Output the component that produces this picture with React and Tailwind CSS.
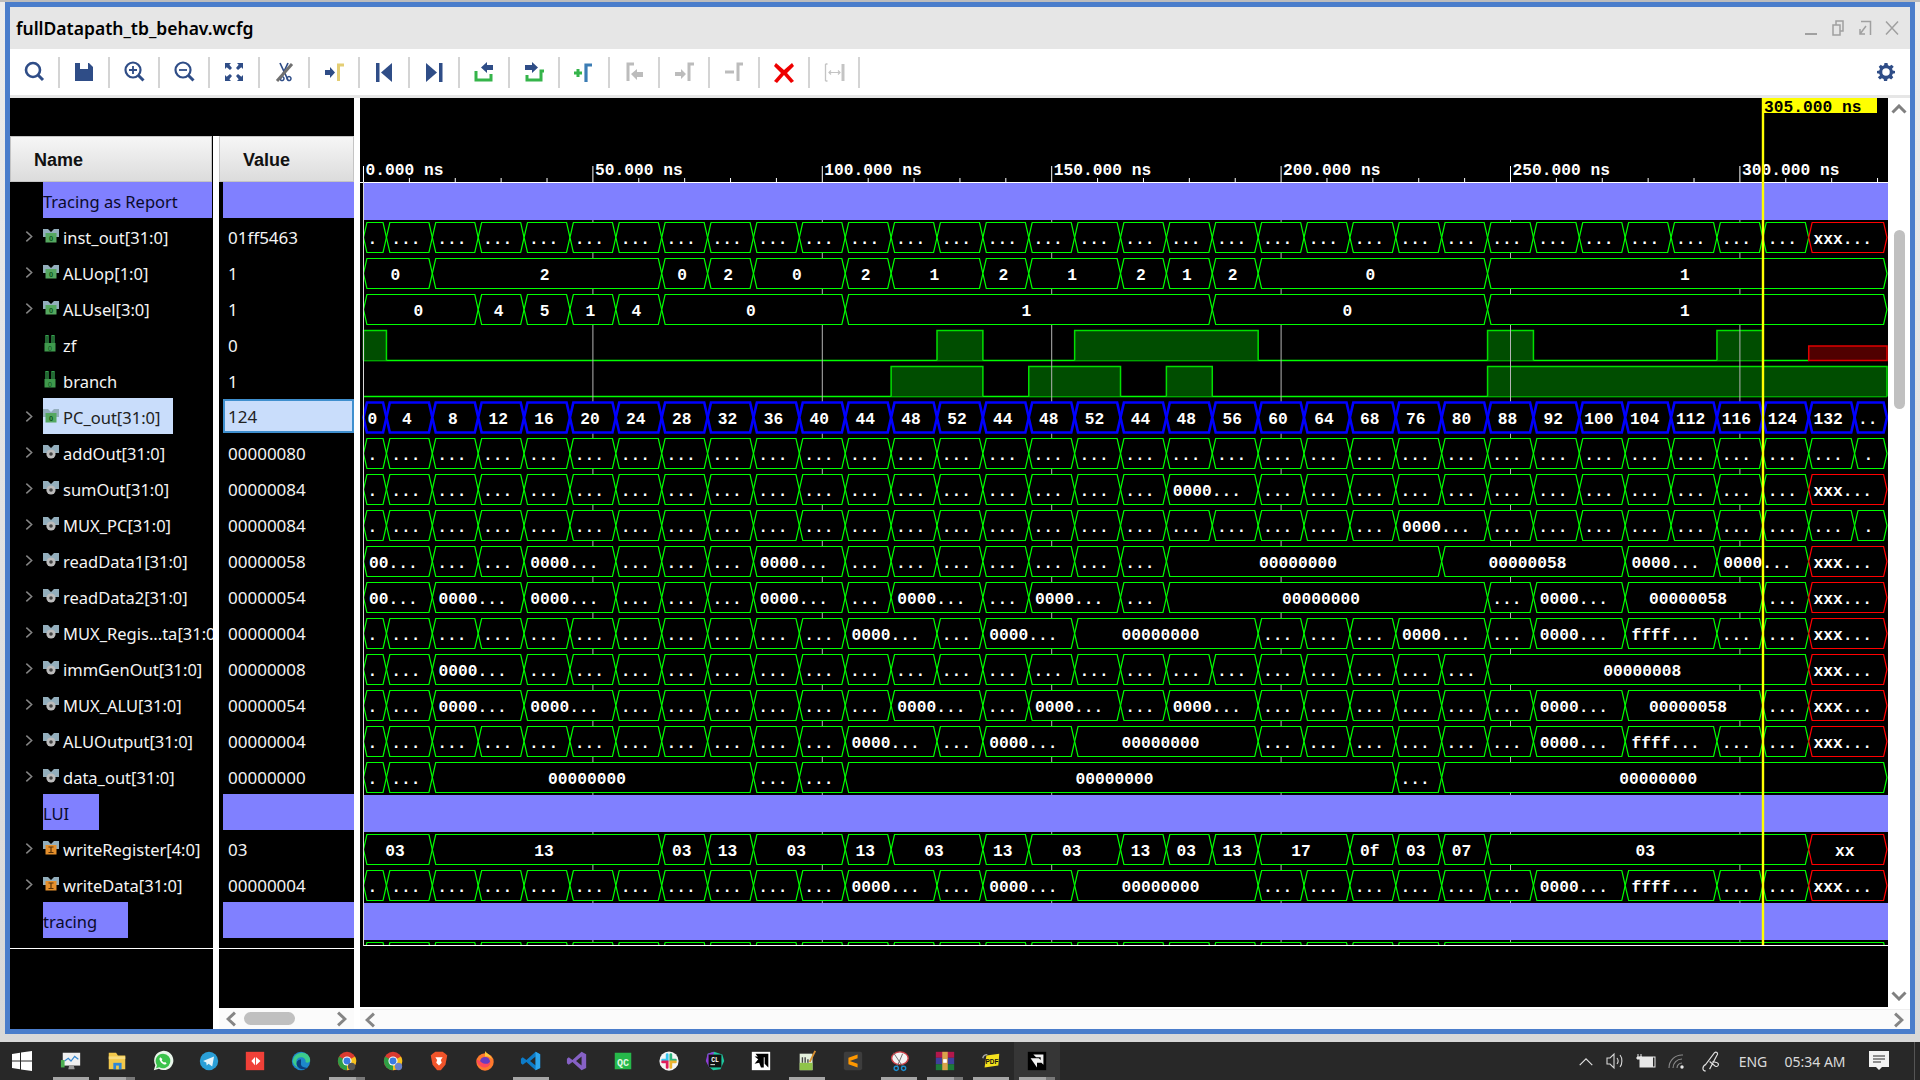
import { Fragment } from 'react';

const dots = (n) => Array(n).fill([1, '...']);
const XX = [2, 'xxx...'];
const OH = [2, '0000...'];

const aluOutput = [[1, '.'], ...dots(10), OH, ...dots(1), OH, [4, '00000000'], ...dots(6), OH, [2, 'ffff...'], ...dots(2), XX];

// each entry: [slots, label]; a slot is one 10 ns clock period
const SIGNALS = [
  { name: 'inst_out[31:0]', value: '01ff5463', icon: 'bus', wave: [[1, '.'], ...dots(31), XX] },
  { name: 'ALUop[1:0]', value: '1', icon: 'bus', wave: [[2, '0'], [5, '2'], [1, '0'], [1, '2'], [2, '0'], [1, '2'], [2, '1'], [1, '2'], [2, '1'], [1, '2'], [1, '1'], [1, '2'], [5, '0'], [9, '1']] },
  { name: 'ALUsel[3:0]', value: '1', icon: 'bus', wave: [[3, '0'], [1, '4'], [1, '5'], [1, '1'], [1, '4'], [4, '0'], [8, '1'], [6, '0'], [9, '1']] },
  { name: 'zf', value: '0', icon: 'bit', bits: [[0, 0], [13, 13], [16, 19], [25, 25], [30, 30]], unknownFrom: 32 },
  { name: 'branch', value: '1', icon: 'bit', bits: [[12, 13], [15, 16], [18, 18], [25, 33]] },
  { name: 'PC_out[31:0]', value: '124', icon: 'bus', selected: true, wave: ['0', '4', '8', '12', '16', '20', '24', '28', '32', '36', '40', '44', '48', '52', '44', '48', '52', '44', '48', '56', '60', '64', '68', '76', '80', '88', '92', '100', '104', '112', '116', '124', '132', '..'].map((l) => [1, l]) },
  { name: 'addOut[31:0]', value: '00000080', icon: 'gear', wave: [[1, '.'], ...dots(32), [1, '.']] },
  { name: 'sumOut[31:0]', value: '00000084', icon: 'gear', wave: [[1, '.'], ...dots(17), OH, ...dots(12), XX] },
  { name: 'MUX_PC[31:0]', value: '00000084', icon: 'gear', wave: [[1, '.'], ...dots(22), OH, ...dots(8), [1, '.']] },
  { name: 'readData1[31:0]', value: '00000058', icon: 'gear', wave: [[2, '00...'], ...dots(2), OH, ...dots(3), OH, ...dots(7), [6, '00000000'], [4, '00000058'], OH, OH, XX] },
  { name: 'readData2[31:0]', value: '00000054', icon: 'gear', wave: [[2, '00...'], OH, OH, ...dots(3), OH, ...dots(1), OH, ...dots(1), OH, ...dots(1), [7, '00000000'], ...dots(1), OH, [3, '00000058'], ...dots(1), XX] },
  { name: 'MUX_Regis...ta[31:0]', value: '00000004', icon: 'gear', wave: [[1, '.'], ...dots(10), OH, ...dots(1), OH, [4, '00000000'], ...dots(3), OH, ...dots(1), OH, [2, 'ffff...'], ...dots(2), XX] },
  { name: 'immGenOut[31:0]', value: '00000008', icon: 'gear', wave: [[1, '.'], ...dots(1), OH, ...dots(21), [7, '00000008'], XX] },
  { name: 'MUX_ALU[31:0]', value: '00000054', icon: 'gear', wave: [[1, '.'], ...dots(1), OH, OH, ...dots(6), OH, ...dots(1), OH, ...dots(1), OH, ...dots(6), OH, [3, '00000058'], ...dots(1), XX] },
  { name: 'ALUOutput[31:0]', value: '00000004', icon: 'gear', wave: aluOutput },
  { name: 'data_out[31:0]', value: '00000000', icon: 'gear', wave: [[1, '.'], ...dots(1), [7, '00000000'], ...dots(2), [12, '00000000'], ...dots(1), [10, '00000000']] },
];

const WRITES = [
  { name: 'writeRegister[4:0]', value: '03', icon: 'out', wave: [[2, '03'], [5, '13'], [1, '03'], [1, '13'], [2, '03'], [1, '13'], [2, '03'], [1, '13'], [2, '03'], [1, '13'], [1, '03'], [1, '13'], [2, '17'], [1, '0f'], [1, '03'], [1, '07'], [7, '03'], [2, 'xx']] },
  { name: 'writeData[31:0]', value: '00000004', icon: 'out', wave: aluOutput },
];

const X = (t) => 363.5 + t * 4.588;
const slotStart = (i) => (i === 0 ? X(0) : X(5 + 10 * (i - 1)));
const slotEnd = (i) => (i >= 33 ? 1887 : X(5 + 10 * i));

function BusRow({ top, wave, color = '#00ff00', width = 1.2, showLabels = true }) {
  const y0 = top + 0.5;
  const y1 = top + 30.5;
  const mid = top + 15.5;
  let slot = 0;
  return (
    <g>
      {wave.map(([n, label], idx) => {
        const s = slotStart(slot);
        const e = slotEnd(slot + n - 1);
        slot += n;
        const stroke = label.startsWith('x') ? '#ff0000' : color;
        return (
          <Fragment key={idx}>
            <polygon
              points={`${s},${mid} ${s + 3.4},${y0} ${e - 3.4},${y0} ${e},${mid} ${e - 3.4},${y1} ${s + 3.4},${y1}`}
              fill="#000"
              stroke={stroke}
              strokeWidth={width}
            />
            {showLabels && (
              <text x={(s + e) / 2 - (2 + 0.5 * label.length)} y={top + 22} textAnchor="middle" fill="#fff">
                {label}
              </text>
            )}
          </Fragment>
        );
      })}
    </g>
  );
}

function BitRow({ top, bits, unknownFrom }) {
  const y0 = top + 0.5;
  const y1 = top + 30.5;
  const end = unknownFrom ? slotEnd(unknownFrom - 1) : 1887;
  return (
    <g>
      <line x1={X(0)} x2={end} y1={y1} y2={y1} stroke="#00ff00" strokeWidth="1.5" />
      {bits.map(([a, b]) => {
        const s = slotStart(a);
        const e = slotEnd(b);
        return (
          <g key={a}>
            <rect x={s} y={y0} width={e - s} height={y1 - y0} fill="#004d00" />
            <path d={`M${s} ${y1}V${y0}H${e}V${y1}`} fill="none" stroke="#00e000" strokeWidth="1.5" />
          </g>
        );
      })}
      {unknownFrom && (
        <rect x={slotStart(unknownFrom)} y={top + 16} width={1887 - slotStart(unknownFrom)} height="14.5" fill="#500000" stroke="#e00000" strokeWidth="1.5" />
      )}
    </g>
  );
}

function WaveCanvas() {
  const majors = [0, 50, 100, 150, 200, 250, 300];
  const minors = [];
  for (let t = 10; t <= 330; t += 10) if (t % 50 !== 0) minors.push(t);
  return (
    <svg viewBox="360 98 1528 909" className="block w-[1528px] h-[909px] bg-black font-['Liberation_Mono',monospace] font-bold text-[16.25px]">
      {SIGNALS.filter((s) => s.bits).map((s) => (
        <BitRow key={s.name} top={222 + 36 * SIGNALS.indexOf(s)} bits={s.bits} unknownFrom={s.unknownFrom} />
      ))}
      {majors.map((t) => (
        <line key={t} x1={X(t)} x2={X(t)} y1="183" y2="945" stroke="#b4b4b4" />
      ))}
      <rect x="363" y="183" width="1525" height="37" fill="#8080ff" />
      <rect x="363" y="795" width="1525" height="37" fill="#8080ff" />
      <rect x="363" y="903" width="1525" height="37" fill="#8080ff" />

      {SIGNALS.map((s, i) =>
        s.wave ? (
          <BusRow key={s.name} top={222 + 36 * i} wave={s.wave} color={s.selected ? '#0000ff' : '#00ff00'} width={s.selected ? 2.6 : 1.2} />
        ) : null,
      )}
      {WRITES.map((s, i) => (
        <BusRow key={s.name} top={834 + 36 * i} wave={s.wave} />
      ))}
      <BusRow top={942} wave={[[1, '.'], ...dots(23), [10, '']]} showLabels={false} />
      <rect x="360" y="945" width="1528" height="62" fill="#000" />

      <line x1="360" x2="1888" y1="182.5" y2="182.5" stroke="#fff" />
      <line x1="363" x2="1888" y1="945.5" y2="945.5" stroke="#fff" />
      <line x1="363.5" x2="363.5" y1="166" y2="946" stroke="#d8d8d8" />
      {minors.map((t) => (
        <line key={t} x1={X(t)} x2={X(t)} y1="178" y2="182" stroke="#fff" />
      ))}
      {majors.map((t) => (
        <Fragment key={t}>
          <line x1={X(t)} x2={X(t)} y1="166" y2="182" stroke="#fff" />
          <text x={X(t) + 2} y="175" fill="#fff">{`${t}.000 ns`}</text>
        </Fragment>
      ))}

      <rect x="1763" y="98" width="114" height="15" fill="#ffff00" />
      <text x="1764" y="112" fill="#000">305.000 ns</text>
      <line x1="1763" x2="1763" y1="98" y2="945" stroke="#ffff00" strokeWidth="2.4" />
    </svg>
  );
}

function Chevron({ dir = 'right', size = 'h-[13px] w-[8px]', color = '#858585', sw = 1.7 }) {
  const d = { right: 'M1.5 1.5 7.5 7l-6 5.5', left: 'M7.5 1.5 1.5 7l6 5.5' }[dir];
  return (
    <svg viewBox="0 0 9 14" className={size}>
      <path d={d} fill="none" stroke={color} strokeWidth={sw} />
    </svg>
  );
}

function VArrow({ up }) {
  return (
    <svg viewBox="0 0 16 10" className="w-[16px] h-[10px]">
      <path d={up ? 'M1.5 8.5 8 2l6.5 6.5' : 'M1.5 1.5 8 8l6.5-6.5'} fill="none" stroke="#808080" strokeWidth="3" />
    </svg>
  );
}

function SignalIcon({ type }) {
  if (type === 'bit') {
    return (
      <svg viewBox="0 0 16 17" className="w-[16px] h-[17px] shrink-0 -mt-[5px]">
        <path d="M3 0v8M5 0v8M9 0v8M11 0v8" stroke="#35a04e" strokeWidth="1.300" />
        <path d="M3 .5h2M9 .5h2" stroke="#35a04e" />
        <rect x="1.500" y="8" width="11" height="8.500" fill="#3f9a4d" />
        <text x="7" y="15.500" fontSize="7" textAnchor="middle" fill="#0b4f1c" fontFamily="Liberation Sans">0</text>
      </svg>
    );
  }
  const box = type === 'out' ? '#e48f2c' : '#55a860';
  return (
    <svg viewBox="0 0 16 15" className="w-[16px] h-[15px] shrink-0 -mt-[5px]">
      <path d="M0 1h5l3 3 3-3h5v8H0z" fill="#93aebc" />
      {type === 'gear' ? (
        <>
          <circle cx="8" cy="10" r="4.600" fill="#bcbcbc" />
          <circle cx="8" cy="10" r="1.800" fill="#444" />
        </>
      ) : (
        <>
          <rect x="2.500" y="5" width="11" height="9.500" fill={box} />
          {type === 'out' ? (
            <path d="M5.500 7h5M5.500 12.500h5M8 7v5.500" stroke="#5a3205" strokeWidth="1.200" />
          ) : (
            <text x="8" y="13" fontSize="7.500" textAnchor="middle" fill="#0c5a1d" fontFamily="Liberation Sans" fontWeight="700">0</text>
          )}
        </>
      )}
    </svg>
  );
}

function GroupName({ label, w }) {
  return (
    <div className="h-[36px] pl-[33px]">
      <div className={`h-full ${w} bg-[#8080ff] text-[#0a0a2a] flex items-center overflow-hidden whitespace-nowrap pt-[4px]`}>{label}</div>
    </div>
  );
}

function NameRow({ s }) {
  return (
    <div className="h-[36px] flex items-center whitespace-nowrap overflow-hidden">
      <div className="w-[33px] pl-[15px] shrink-0 flex">{s.icon !== 'bit' && <Chevron />}</div>
      <div className={`h-full flex items-center gap-[4px] pt-[4px] ${s.selected ? 'w-[130px] bg-[#c9ddfb] text-[#222]' : 'text-[#f4f4f4]'}`}>
        <SignalIcon type={s.icon} />
        <span>{s.name}</span>
      </div>
    </div>
  );
}

function ValueRow({ s }) {
  if (s.selected) {
    return (
      <div className="h-[36px] pl-[4px] py-[1px]">
        <div className="h-full border-2 border-[#3f8fce] bg-[#c9ddfb] text-[#222] text-[17px] flex items-center pl-[3px] pt-[2px]">{s.value}</div>
      </div>
    );
  }
  return <div className="h-[36px] pl-[9px] pt-[4px] flex items-center text-[17px] text-[#f4f4f4]">{s.value}</div>;
}

function GroupValue() {
  return (
    <div className="h-[36px] pl-[4px]">
      <div className="h-full bg-[#8080ff]" />
    </div>
  );
}

const N = '#2f4d87';

const TOOLS = [
  <g key="a" fill="none" stroke={N} strokeWidth="2.600"><circle cx="11" cy="10" r="7" /><path d="M16 15l5 5" strokeWidth="3" /></g>,
  <path key="b" d="M3 3h14l4 4v14H3z M8 3v6h8V3z" fill={N} fillRule="evenodd" />,
  <g key="c" fill="none" stroke={N} strokeWidth="2.200"><circle cx="11" cy="10" r="7.500" /><path d="M16.500 15.500l5 5" strokeWidth="3" /><path d="M7 10h8M11 6v8" strokeWidth="1.800" /></g>,
  <g key="d" fill="none" stroke={N} strokeWidth="2.200"><circle cx="11" cy="10" r="7.500" /><path d="M16.500 15.500l5 5" strokeWidth="3" /><path d="M7 10h8" strokeWidth="1.800" /></g>,
  <g key="e"><path d="M3 3h6L7.300 4.700 10 8 8 10 4.700 7.300 3 9zM21 3v6l-1.700-1.700L16 10l-2-2 2.700-3.300L15 3zM3 21v-6l1.700 1.700L8 14l2 2-2.700 3.300L9 21zM21 21h-6l1.700-1.700L14 16l2-2 3.300 2.700L21 15z" fill={N} /></g>,
  <g key="f" fill="none"><path d="M8 3l8 17M16 3 8 20" stroke={N} strokeWidth="1.700" /><path d="M8 18.500a2 2 0 110 .1M15 18.500a2 2 0 110 .1" stroke={N} strokeWidth="1.500" /><path d="M20 4 5 21" stroke="#707070" strokeWidth="3" /></g>,
  <g key="g"><path d="M3 10h5V7l5 5.500L8 18v-3H3z" fill={N} /><path d="M16.500 21V5h5.500" fill="none" stroke="#e4ce74" strokeWidth="3" /></g>,
  <g key="h" fill={N}><rect x="4" y="3" width="3.500" height="19" /><path d="M20 3v19L9 12.500z" /></g>,
  <g key="i" fill={N}><rect x="17" y="3" width="3.500" height="19" /><path d="M4 3v19l11-9.500z" /></g>,
  <g key="j"><path d="M4 11v9h15v-6" fill="none" stroke="#35b44a" strokeWidth="3" /><path d="M9 7.500l6-5.500v3h6v5h-6v3z" fill={N} /></g>,
  <g key="k"><path d="M5 15v5h14v-9h3" fill="none" stroke="#35b44a" strokeWidth="3" /><path d="M3 5h7V2l6 5.500L10 13v-3H3z" fill={N} /></g>,
  <g key="l"><path d="M2 13h8M6 9v8" stroke="#35b44a" strokeWidth="3" /><path d="M14 22V5h6" fill="none" stroke="#3b7cb4" strokeWidth="3.200" /></g>,
  <g key="m" fill="#bcbcbc"><path d="M6 21V4h6" fill="none" stroke="#bcbcbc" strokeWidth="3" /><path d="M9 14l6-5v3h6v5h-6v3z" /></g>,
  <g key="n" fill="#bcbcbc"><path d="M3 12h6V9l5 5-5 5v-3H3z" /><path d="M17 21V4h5" fill="none" stroke="#bcbcbc" strokeWidth="3" /></g>,
  <g key="o"><path d="M3 12h9" stroke="#bcbcbc" strokeWidth="3" /><path d="M16 21V4h5" fill="none" stroke="#bcbcbc" strokeWidth="3" /></g>,
  <path key="p" d="M4 3l8 7 8-7 2 3-7 7 7 8-3 2-7-8-7 8-3-2 7-8-7-7z" fill="#ee0000" />,
  <g key="q" fill="none" stroke="#c4c4c4"><path d="M3.500 4v17M5.500 4H3.500M5.500 21H3.500" strokeWidth="1.300" /><path d="M21 4v17" strokeWidth="3" /><path d="M7 12.500h11M9 10.500l-2 2 2 2M16 10.500l2 2-2 2" strokeWidth="1.200" /></g>,
];

function Toolbar() {
  return (
    <div className="h-[46px] bg-white flex items-center">
      {TOOLS.map((icon, i) => (
        <div key={i} className="w-[50px] h-[31px] border-r-2 border-[#d4d4d4] flex items-center justify-center">
          <svg viewBox="0 0 24 24" className="w-[24px] h-[24px]">{icon}</svg>
        </div>
      ))}
      <svg viewBox="0 0 24 24" className="w-[18px] h-[18px] ml-auto mr-[15px]">
        <path d="M10 1h4l.6 3 2.300 1 2.600-1.700 2.800 2.800L20 8.700l1 2.300 3 .6v3l-3 .6-1 2.300 1.700 2.600-2.800 2.800-2.600-1.700-2.300 1-.6 3h-4l-.6-3-2.300-1-2.600 1.700-2.800-2.800L4 17.500l-1-2.300-3-.6v-3l3-.6 1-2.300-1.700-2.600 2.800-2.800L7.100 5l2.300-1zM12 8a5 5 0 100 10 5 5 0 000-10z" fill={N} fillRule="evenodd" transform="translate(0 -1)" />
      </svg>
    </div>
  );
}

function WindowButtons() {
  return (
    <div className="flex items-center gap-[11px] mr-[10px]">
      <svg viewBox="0 0 16 16" className="w-[16px] h-[16px]"><path d="M2 14h12" stroke="#a0a0a0" strokeWidth="2" /></svg>
      <svg viewBox="0 0 16 16" className="w-[16px] h-[16px]"><path d="M6 5V1h7v10h-3M3 5h7v10H3z" fill="none" stroke="#a0a0a0" strokeWidth="1.500" /></svg>
      <svg viewBox="0 0 16 16" className="w-[16px] h-[16px]"><path d="M4 1.500h9.500V15M9 6 3 14M3 9v5h5" fill="none" stroke="#a0a0a0" strokeWidth="1.500" /></svg>
      <svg viewBox="0 0 16 16" className="w-[16px] h-[16px]"><path d="M2 1.500l12 13M14 1.500l-12 13" fill="none" stroke="#a0a0a0" strokeWidth="1.500" /></svg>
    </div>
  );
}

const APPS = [
  { on: 1, g: <g><rect x="3" y="3" width="19" height="14" fill="#f0f0f0" /><path d="M5 12l4-3 3 3 4-5 4 3" fill="none" stroke="#3a8ad0" strokeWidth="1.300" /><path d="M10 17h5l1 4H9z" fill="#9a9a9a" /><rect x="1" y="11" width="4" height="8" fill="#4caf50" /></g> },
  { on: 2, g: <g><path d="M3 3h8l2 3h8v15H3z" fill="#f2c84b" /><path d="M3 7h18v3H3z" fill="#f8dc80" /><rect x="8" y="14" width="9" height="7" fill="#2f86d8" /><rect x="11" y="17" width="3" height="4" fill="#f2c84b" /></g> },
  { g: <g><path d="M2 22l1.600-5.500A10.500 10.500 0 1 1 7.500 20.500z" fill="#e8f5ea" /><path d="M12 4a8 8 0 0 0-6.600 12.500l-.9 3.300 3.400-.9A8 8 0 1 0 12 4z" fill="#3ac34c" /><path d="M9 8c-1.500 1-1 3.500 1 5.500s4.500 3 6 1.500l-1.500-2-1.500.7c-1-.5-2-1.600-2.400-2.500l.8-1.300z" fill="#fff" /></g> },
  { g: <g><circle cx="12" cy="12" r="10" fill="#2a9fd8" /><path d="M5.500 12 17.500 7l-2 11-4-3-2 2-.5-3.500z" fill="#e6f4fb" /></g> },
  { g: <g><rect x="2" y="2" width="20" height="20" fill="#f04038" /><path d="M8 12l4-4.500v9zM13 7.500l5 4.500-5 4.500z" fill="#fff" /></g> },
  { g: <g><circle cx="12" cy="12" r="10" fill="#1d87cc" /><path d="M3 13c0-6 5-10 10-10 5 0 9 3.500 9 8 0 3-4 3.500-5 2 .5-3-2-5-5-5-4 0-6 3.500-4.500 7 1.500 3.500 5 5 8 4.500A10 10 0 0 1 3 13z" fill="#3ccb8c" /><path d="M12 10a5 5 0 0 0-4 8c2 3 7 4 11 1.500-3 0-8-1-7-5.500z" fill="#0a3f80" /></g> },
  { on: 2, g: <g><circle cx="12" cy="12" r="10" fill="#d93a30" /><path d="M12 12 3.400 7A10 10 0 0 0 12 22z" fill="#2f9e44" /><path d="M12 12v10a10 10 0 0 0 8.700-15z" fill="#f6c21c" /><circle cx="12" cy="12" r="5" fill="#fff" /><circle cx="12" cy="12" r="3.800" fill="#3b7be0" /><circle cx="17" cy="18" r="4" fill="#555" /></g> },
  { g: <g><circle cx="12" cy="12" r="10" fill="#d93a30" /><path d="M12 12 3.400 7A10 10 0 0 0 12 22z" fill="#2f9e44" /><path d="M12 12v10a10 10 0 0 0 8.700-15z" fill="#f6c21c" /><circle cx="12" cy="12" r="5" fill="#fff" /><circle cx="12" cy="12" r="3.800" fill="#3b7be0" /><circle cx="18" cy="18" r="4" fill="#6a82c8" /></g> },
  { g: <g><path d="M5 4l3-2h8l3 2 2 2-2 10-5 6h-4l-5-6L3 6z" fill="#f0542a" /><path d="M8 8h8l-2 3 1 3-3 3-3-3 1-3z" fill="#fff" /></g> },
  { g: <g><circle cx="12" cy="13" r="9.500" fill="#ff7a2d" /><path d="M12 1c2 3 6 4 8 9-3-3-5-3-8-3z" fill="#ffc83a" /><circle cx="12" cy="13" r="5.500" fill="#6a3bc0" /><path d="M3 11c3-1 4 3 9 4 3 .6 5-1 6-3 0 5-4 8-8 7S3 15 3 11z" fill="#ff4a5a" /></g> },
  { on: 1, g: <g><path d="M17 2l5 2.500v15L17 22 7 13l-4 3-2-1.500v-5L3 8l4 3z" fill="#0d7cc9" /><path d="M17 7l-6 5 6 5z" fill="#282828" /><path d="M17 2l5 2.500v15L17 22v-5l0-10z" fill="#2ea6ec" /></g> },
  { g: <g><path d="M17 2l5 2.500v15L17 22 7 13l-4 3-2-1.500v-5L3 8l4 3z" fill="#8661c5" /><path d="M17 7l-6 5 6 5z" fill="#282828" /></g> },
  { g: <g><rect x="3" y="3" width="18" height="18" fill="#26b84a" /><text x="12" y="17" fontSize="11" textAnchor="middle" fill="#dff7e4" fontFamily="Liberation Mono" fontWeight="700">QC</text></g> },
  { g: <g><circle cx="12" cy="12" r="10.500" fill="#f4f4f4" /><path d="M10 5v6H5" fill="none" stroke="#36c5f0" strokeWidth="3" strokeLinecap="round" /><path d="M14 5v6h5" fill="none" stroke="#2eb67d" strokeWidth="3" strokeLinecap="round" /><path d="M10 19v-6H5" fill="none" stroke="#e01e5a" strokeWidth="3" strokeLinecap="round" /><path d="M14 19v-6h5" fill="none" stroke="#ecb22e" strokeWidth="3" strokeLinecap="round" /></g> },
  { g: <g><path d="M4 4l7-2 9 3 2 7-4 9-8 1-5-4-2-7z" fill="#1ec8a0" /><path d="M4 4l7-2-5 18-4-8z" fill="#8f3fd8" /><rect x="5" y="5" width="14" height="14" fill="#111" /><text x="12" y="13" fontSize="7" textAnchor="middle" fill="#fff" fontFamily="Liberation Mono" fontWeight="700">CL</text><path d="M7 16h5" stroke="#fff" /></g> },
  { g: <g><rect x="2" y="2" width="20" height="20" fill="#fff" /><path d="M5 7h10v12h-3l-2-5-5 1 4-5z" fill="#000" /><path d="M6 4h14v15l-4-4V8H9z" fill="#000" /></g> },
  { on: 1, g: <g><path d="M4 4h14v18H4z" fill="#e4f0dc" /><rect x="4" y="14" width="14" height="8" fill="#8fc44a" /><path d="M7 8v6M10 8v6M13 10v4" stroke="#444" strokeWidth="1.500" /><path d="M21 1l-6 12" stroke="#d89030" strokeWidth="2" /></g> },
  { g: <g><rect x="2" y="2" width="20" height="20" rx="2" fill="#3d3d3d" /><path d="M7 8.500l10-3.500v4L7 12.500zM7 11.500l10 3.500v4L7 15.500z" fill="#ff9800" /></g> },
  { on: 1, g: <g><ellipse cx="13" cy="9" rx="9" ry="7" fill="#f4f4f4" stroke="#d04048" strokeWidth="1.500" /><path d="M6 3l10 15M16 4 10 18" stroke="#666" strokeWidth="1" /><circle cx="9" cy="20" r="2.300" fill="none" stroke="#1d8ed0" strokeWidth="1.500" /><circle cx="17" cy="20" r="2.300" fill="none" stroke="#1d8ed0" strokeWidth="1.500" /></g> },
  { on: 2, g: <g><rect x="2" y="2" width="20" height="6.500" fill="#b3174c" /><rect x="2" y="8.500" width="20" height="7" fill="#3f3f9c" /><rect x="2" y="15.500" width="20" height="6.500" fill="#1d7a3a" /><rect x="9" y="2" width="6" height="20" fill="#d9a24a" /><rect x="10" y="10" width="4" height="4" fill="#fff" /></g> },
  { on: 1, g: <g><path d="M7 6l14-2-1 13-15 2z" fill="#f5e11d" /><path d="M3 9a5 5 0 0 1 5-4" fill="none" stroke="#aaa" strokeWidth="1.500" /><text x="13" y="15" fontSize="7" textAnchor="middle" fill="#111" fontFamily="Liberation Sans" fontWeight="700">PDF</text></g> },
  { on: 2, active: true, g: <g><rect x="2" y="2" width="20" height="20" fill="#000" /><path d="M5 9h9l5 5H12v5z M8 5h11v11l-3-3V8h-5z" fill="#f0f0f0" /></g> },
];

function Taskbar() {
  return (
    <div className="h-[38px] bg-[#282828] flex text-[#dadada] text-[14px] font-['Noto_Sans',sans-serif]">
      <div className="w-[48px] flex items-center pl-[12px]">
        <svg viewBox="0 0 20 20" className="w-[20px] h-[20px]"><path d="M0 3l8-1.200V9.500H0zM9 1.600 20 0v9.500H9zM0 10.500h8v7.700L0 17zM9 10.500h11V20L9 18.400z" fill="#fff" /></svg>
      </div>
      {APPS.map((a, i) => (
        <div key={i} className={`w-[46px] flex flex-col items-center ${a.active ? 'bg-[#363636]' : ''}`}>
          <div className="h-[35px] pt-[3px] flex items-center">
            <svg viewBox="0 0 24 24" className="w-[22px] h-[22px]">{a.g}</svg>
          </div>
          {a.on ? (
            <div className="w-[36px] h-[3px] flex">
              <div className="flex-1 bg-[#a6a6a6]" />
              {a.on > 1 && <div className="w-[9px] bg-[#787878]" />}
            </div>
          ) : null}
        </div>
      ))}
      <div className="ml-auto flex items-center">
        <div className="w-[30px] flex justify-center">
          <svg viewBox="0 0 16 10" className="w-[16px] h-[9px]"><path d="M1 9l7-7 7 7" fill="none" stroke="#e0e0e0" strokeWidth="1.300" /></svg>
        </div>
        <div className="w-[29px] flex justify-center">
          <svg viewBox="0 0 20 18" className="w-[20px] h-[18px]"><path d="M1 6h3l4-4v14l-4-4H1zM11 6c1.500 2 1.500 4 0 6M14 3c2.500 3 2.500 9 0 12" fill="none" stroke="#d8d8d8" strokeWidth="1.100" /></svg>
        </div>
        <div className="w-[31px] flex justify-center">
          <svg viewBox="0 0 20 14" className="w-[20px] h-[14px]"><path d="M2 0v3M5 0v3M1 3h5v2H1z" stroke="#e8e8e8" fill="#e8e8e8" /><rect x="4" y="3" width="15" height="10" fill="none" stroke="#e8e8e8" /><rect x="4" y="3" width="13" height="10" fill="#e8e8e8" /></svg>
        </div>
        <div className="w-[32px] flex justify-center">
          <svg viewBox="0 0 18 16" className="w-[18px] h-[16px]"><path d="M1 15A13 13 0 0 1 15 2M5 15a9 9 0 0 1 9-9M9 15a5 5 0 0 1 5-5" fill="none" stroke="#8c8c8c" strokeWidth="1.100" /><circle cx="14" cy="14" r="1.700" fill="#e8e8e8" /></svg>
        </div>
        <div className="w-[36px] flex justify-center">
          <svg viewBox="0 0 22 22" className="w-[21px] h-[21px]"><path d="M5 21C1 21 1 16 5 14L14 2c2-2 4 0 3 2L9 19M9 11l6 5c3 1 5-3 1-4l-4-1" fill="none" stroke="#e0e0e0" strokeWidth="1.200" /></svg>
        </div>
        <div className="w-[48px] text-center">ENG</div>
        <div className="w-[76px] text-center whitespace-nowrap">05:34 AM</div>
        <div className="w-[52px] flex justify-center">
          <svg viewBox="0 0 20 20" className="w-[20px] h-[20px]"><path d="M0 0h20v16h-7l-3 3-3-3H0z" fill="#f2f2f2" /><path d="M4 5h12M4 8h12M4 11h8" stroke="#282828" strokeWidth="1" /></svg>
        </div>
        <div className="w-[9px]" />
        <div className="w-[6px] h-full border-l border-[#555]" />
      </div>
    </div>
  );
}

export default function App() {
  return (
    <div className="w-[1920px] h-[1080px] flex flex-col bg-[#eeeeee] font-['Noto_Sans',sans-serif] text-[16.5px] overflow-hidden">
      <div className="h-[1042px] shrink-0 px-[5px] pb-[8px] border-t-2 border-[#bdbdbd] bg-gradient-to-b from-[#ececec] to-[#d8d8d8]">
        <div className="h-full border-[5px] border-[#4a7dcb] flex flex-col bg-white">
          <div className="h-[42px] bg-[#e6e6e6] flex items-center justify-between pl-[6px]">
            <div className="font-semibold text-[17.5px] text-black">fullDatapath_tb_behav.wcfg</div>
            <WindowButtons />
          </div>
          <Toolbar />
          <div className="h-[3px] bg-[#e6e6e6]" />

          <div className="flex-1 flex bg-white min-h-0">
            <div className="w-[344px] flex flex-col">
              <div className="h-[38px] bg-black" />
              <div className="flex-1 flex min-h-0">
                <div className="w-[203px] bg-black flex flex-col">
                  <div className="h-[46px] w-[202px] bg-gradient-to-b from-[#f6f6f6] to-[#dcdcdc] border border-[#c4c4c4] flex items-center pl-[23px] pt-[2px] font-bold text-[18px] text-[#111] font-['Liberation_Sans',sans-serif]">Name</div>
                  <GroupName label="Tracing as Report" w="w-[169px]" />
                  {SIGNALS.map((s) => <NameRow key={s.name} s={s} />)}
                  <GroupName label="LUI" w="w-[56px]" />
                  {WRITES.map((s) => <NameRow key={s.name} s={s} />)}
                  <GroupName label="tracing" w="w-[85px]" />
                  <div className="mt-[10px] border-t border-white" />
                </div>
                <div className="w-[6px] bg-white" />
                <div className="w-[135px] bg-black flex flex-col">
                  <div className="h-[46px] bg-gradient-to-b from-[#f6f6f6] to-[#dcdcdc] border border-[#c4c4c4] flex items-center pl-[23px] pt-[2px] font-bold text-[18px] text-[#111] font-['Liberation_Sans',sans-serif]">Value</div>
                  <GroupValue />
                  {SIGNALS.map((s) => <ValueRow key={s.name} s={s} />)}
                  <GroupValue />
                  {WRITES.map((s) => <ValueRow key={s.name} s={s} />)}
                  <GroupValue />
                  <div className="mt-[10px] border-t border-white flex-1" />
                  <div className="h-[21px] bg-[#fbfbfb] flex items-center justify-between px-[7px]">
                    <Chevron dir="left" size="h-[16px] w-[11px]" sw={2.600} />
                    <div className="w-[51px] h-[13px] mr-[34px] rounded-full bg-[#c0c0c0]" />
                    <Chevron size="h-[16px] w-[11px]" sw={2.600} />
                  </div>
                </div>
              </div>
            </div>
            <div className="w-[6px] bg-white" />
            <div className="flex-1 flex flex-col">
              <div className="flex">
                <WaveCanvas />
                <div className="w-[22px] flex flex-col items-center bg-white py-[6px]">
                  <VArrow up />
                  <div className="mt-[116px] w-[11px] h-[179px] rounded-full bg-[#c0c0c0]" />
                  <div className="mt-auto"><VArrow /></div>
                </div>
              </div>
              <div className="flex-1 mt-[2px] border-t border-[#eeeeee] bg-[#fbfbfb] flex items-center justify-between pl-[5px] pr-[6px]">
                <Chevron dir="left" size="h-[16px] w-[11px]" sw={2.600} />
                <Chevron size="h-[16px] w-[11px]" sw={2.600} />
              </div>
            </div>
          </div>
        </div>
      </div>
      <Taskbar />
    </div>
  );
}
